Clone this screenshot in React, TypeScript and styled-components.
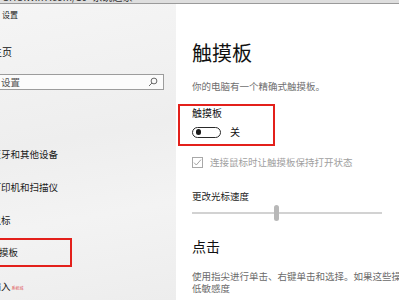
import styled, { createGlobalStyle } from 'styled-components';

const GlobalStyle = createGlobalStyle`
  html, body {
    margin: 0;
    padding: 0;
    background: #ffffff;
    overflow: hidden;
  }
  body {
    font-family: "Noto Sans CJK SC", "Noto Sans", sans-serif;
    color: #1a1a1a;
  }
`;

const Page = styled.div`
  width: 399px;
  height: 300px;
  display: flex;
  flex-direction: column;
  overflow: hidden;
`;

const TopStrip = styled.div`
  height: 3px;
  background: #dedede;
  border-bottom: 1px solid #9a9a9a;
  overflow: hidden;
  font-size: 10px;
  line-height: 10px;
  color: #333;
  white-space: nowrap;

  span {
    display: block;
    margin-top: -8px;
    padding-left: 2px;
  }
`;

const Window = styled.div`
  flex: 1;
  display: flex;
  min-height: 0;
`;

const Sidebar = styled.nav`
  box-sizing: border-box;
  width: 186px;
  margin-left: -10px;
  padding-left: 10px;
  padding-right: 12px;
  flex-shrink: 0;
  background: linear-gradient(170deg, #f5f5f5 0%, #eeeeee 45%, #f3f3f3 70%, #ededed 100%);
  display: flex;
  flex-direction: column;
`;

const AppTitle = styled.div`
  font-size: 8px;
  line-height: 10px;
  color: #222;
  margin-top: 6px;
  margin-left: 2px;
`;

const HomeLink = styled.div`
  font-size: 10px;
  line-height: 12px;
  color: #111;
  margin-top: 26px;
  margin-left: -8px;
`;

const SearchBox = styled.div`
  margin-top: 16px;
  margin-left: -10px;
  height: 22px;
  box-sizing: border-box;
  border: 1px solid #9c9c9c;
  background: #fbfbfb;
  display: flex;
  align-items: center;
  justify-content: space-between;
  padding: 0 5px 0 10px;
  font-size: 9.5px;
  color: #555;
`;

const NavList = styled.div`
  margin-top: 47px;
  display: flex;
  flex-direction: column;
`;

const NavItem = styled.div`
  height: 33px;
  display: flex;
  align-items: center;
  margin-left: -10px;
  font-size: 9.5px;
  color: #1a1a1a;
  white-space: nowrap;
`;

const NavLabel = styled.span<{ $marked?: boolean }>`
  display: flex;
  align-items: center;
  box-sizing: border-box;
  height: ${p => (p.$marked ? '29px' : 'auto')};
  width: ${p => (p.$marked ? '92px' : 'auto')};
  margin-left: ${p => (p.$marked ? '-10px' : '0')};
  padding-left: ${p => (p.$marked ? '9.5px' : '1.5px')};
  border: ${p => (p.$marked ? '2px solid #e3201b' : 'none')};
  border-left: none;
  margin-top: ${p => (p.$marked ? '-1px' : '0')};
`;

const Watermark = styled.span`
  font-size: 4px;
  color: #e05a5a;
  margin-left: 1px;
  margin-top: 5px;
`;

const Content = styled.main`
  flex: 1;
  padding: 37px 0 0 16px;
  background: #ffffff;
  white-space: nowrap;
  min-width: 0;
`;

const PageTitle = styled.h1`
  margin: 0;
  font-size: 20px;
  line-height: 24px;
  font-weight: 400;
  color: #111;
`;

const Description = styled.p`
  margin: 15px 0 0;
  font-size: 9.5px;
  line-height: 12px;
  color: #6f6f6f;
`;

const Marked = styled.div`
  margin: 12px 0 0 -14px;
  width: 97px;
  height: 42px;
  box-sizing: border-box;
  border: 2px solid #e3201b;
  padding: 1px 0 0 12px;
`;

const FieldLabel = styled.div`
  font-size: 10px;
  line-height: 12px;
  color: #111;
`;

const ToggleRow = styled.div`
  margin-top: 7px;
  display: flex;
  align-items: center;
`;

const Toggle = styled.div`
  width: 29px;
  height: 11px;
  box-sizing: border-box;
  border: 1.5px solid #2a2a2a;
  border-radius: 6px;
  display: flex;
  align-items: center;
  padding-left: 2.5px;

  &::after {
    content: '';
    width: 5.5px;
    height: 5.5px;
    border-radius: 50%;
    background: #1a1a1a;
  }
`;

const ToggleState = styled.span`
  margin-left: 9px;
  font-size: 10px;
  line-height: 12px;
  color: #111;
`;

const CheckRow = styled.div`
  margin-top: 10px;
  display: flex;
  align-items: center;
  font-size: 9.5px;
  line-height: 12px;
  color: #a0a0a0;
`;

const CheckBox = styled.span`
  width: 11px;
  height: 11px;
  box-sizing: border-box;
  border: 1px solid #a8a8a8;
  display: flex;
  align-items: center;
  justify-content: center;
  margin-right: 7px;
`;

const SubLabel = styled.div`
  margin-top: 22px;
  font-size: 9.5px;
  line-height: 12px;
  color: #222;
`;

const Slider = styled.div`
  position: relative;
  margin-top: 3px;
  width: 190px;
  height: 16px;
  display: flex;
  align-items: center;
`;

const Track = styled.div`
  width: 100%;
  height: 2px;
  background: #d2d2d2;
`;

const Thumb = styled.div`
  position: absolute;
  top: 0;
  width: 5px;
  height: 16px;
  border-radius: 3px;
  background: #b8b8b8;
`;

const SectionTitle = styled.h2`
  margin: 17px 0 0;
  font-size: 14px;
  line-height: 16px;
  font-weight: 400;
  color: #111;
`;

const Paragraph = styled.p`
  margin: 16px 0 0;
  font-size: 9.5px;
  line-height: 12px;
  color: #6a6a6a;
`;

const SearchIcon = () => (
  <svg width="10" height="10" viewBox="0 0 10 10" fill="none" stroke="#444" strokeWidth="0.8">
    <circle cx="6" cy="4" r="2.9" />
    <line x1="3.9" y1="6.1" x2="1" y2="9" />
  </svg>
);

const CheckMark = () => (
  <svg width="9" height="9" viewBox="0 0 9 9" fill="none" stroke="#9a9a9a" strokeWidth="0.9">
    <polyline points="1,4.6 3.3,7 8,1.6" />
  </svg>
);

const navItems = ['蓝牙和其他设备', '打印机和扫描仪', '鼠标', '触摸板', '输入'];

export default function App() {
  const speed = 82;
  return (
    <>
      <GlobalStyle />
      <Page>
        <TopStrip>
          <span>GHO.Win7.com/10=系统之家</span>
        </TopStrip>
        <Window>
          <Sidebar>
            <AppTitle>设置</AppTitle>
            <HomeLink>主页</HomeLink>
            <SearchBox>
              <span>设置</span>
              <SearchIcon />
            </SearchBox>
            <NavList>
              {navItems.map(item => (
                <NavItem key={item}>
                  <NavLabel $marked={item === '触摸板'}>{item}</NavLabel>
                  {item === '输入' && <Watermark>系统城</Watermark>}
                </NavItem>
              ))}
            </NavList>
          </Sidebar>
          <Content>
            <PageTitle>触摸板</PageTitle>
            <Description>你的电脑有一个精确式触摸板。</Description>
            <Marked>
              <FieldLabel>触摸板</FieldLabel>
              <ToggleRow>
                <Toggle />
                <ToggleState>关</ToggleState>
              </ToggleRow>
            </Marked>
            <CheckRow>
              <CheckBox>
                <CheckMark />
              </CheckBox>
              连接鼠标时让触摸板保持打开状态
            </CheckRow>
            <SubLabel>更改光标速度</SubLabel>
            <Slider>
              <Track />
              <Thumb style={{ left: speed }} />
            </Slider>
            <SectionTitle>点击</SectionTitle>
            <Paragraph>
              使用指尖进行单击、右键单击和选择。如果这些操作没有按预期工作，请尝试降
              <br />
              低敏感度
            </Paragraph>
          </Content>
        </Window>
      </Page>
    </>
  );
}
